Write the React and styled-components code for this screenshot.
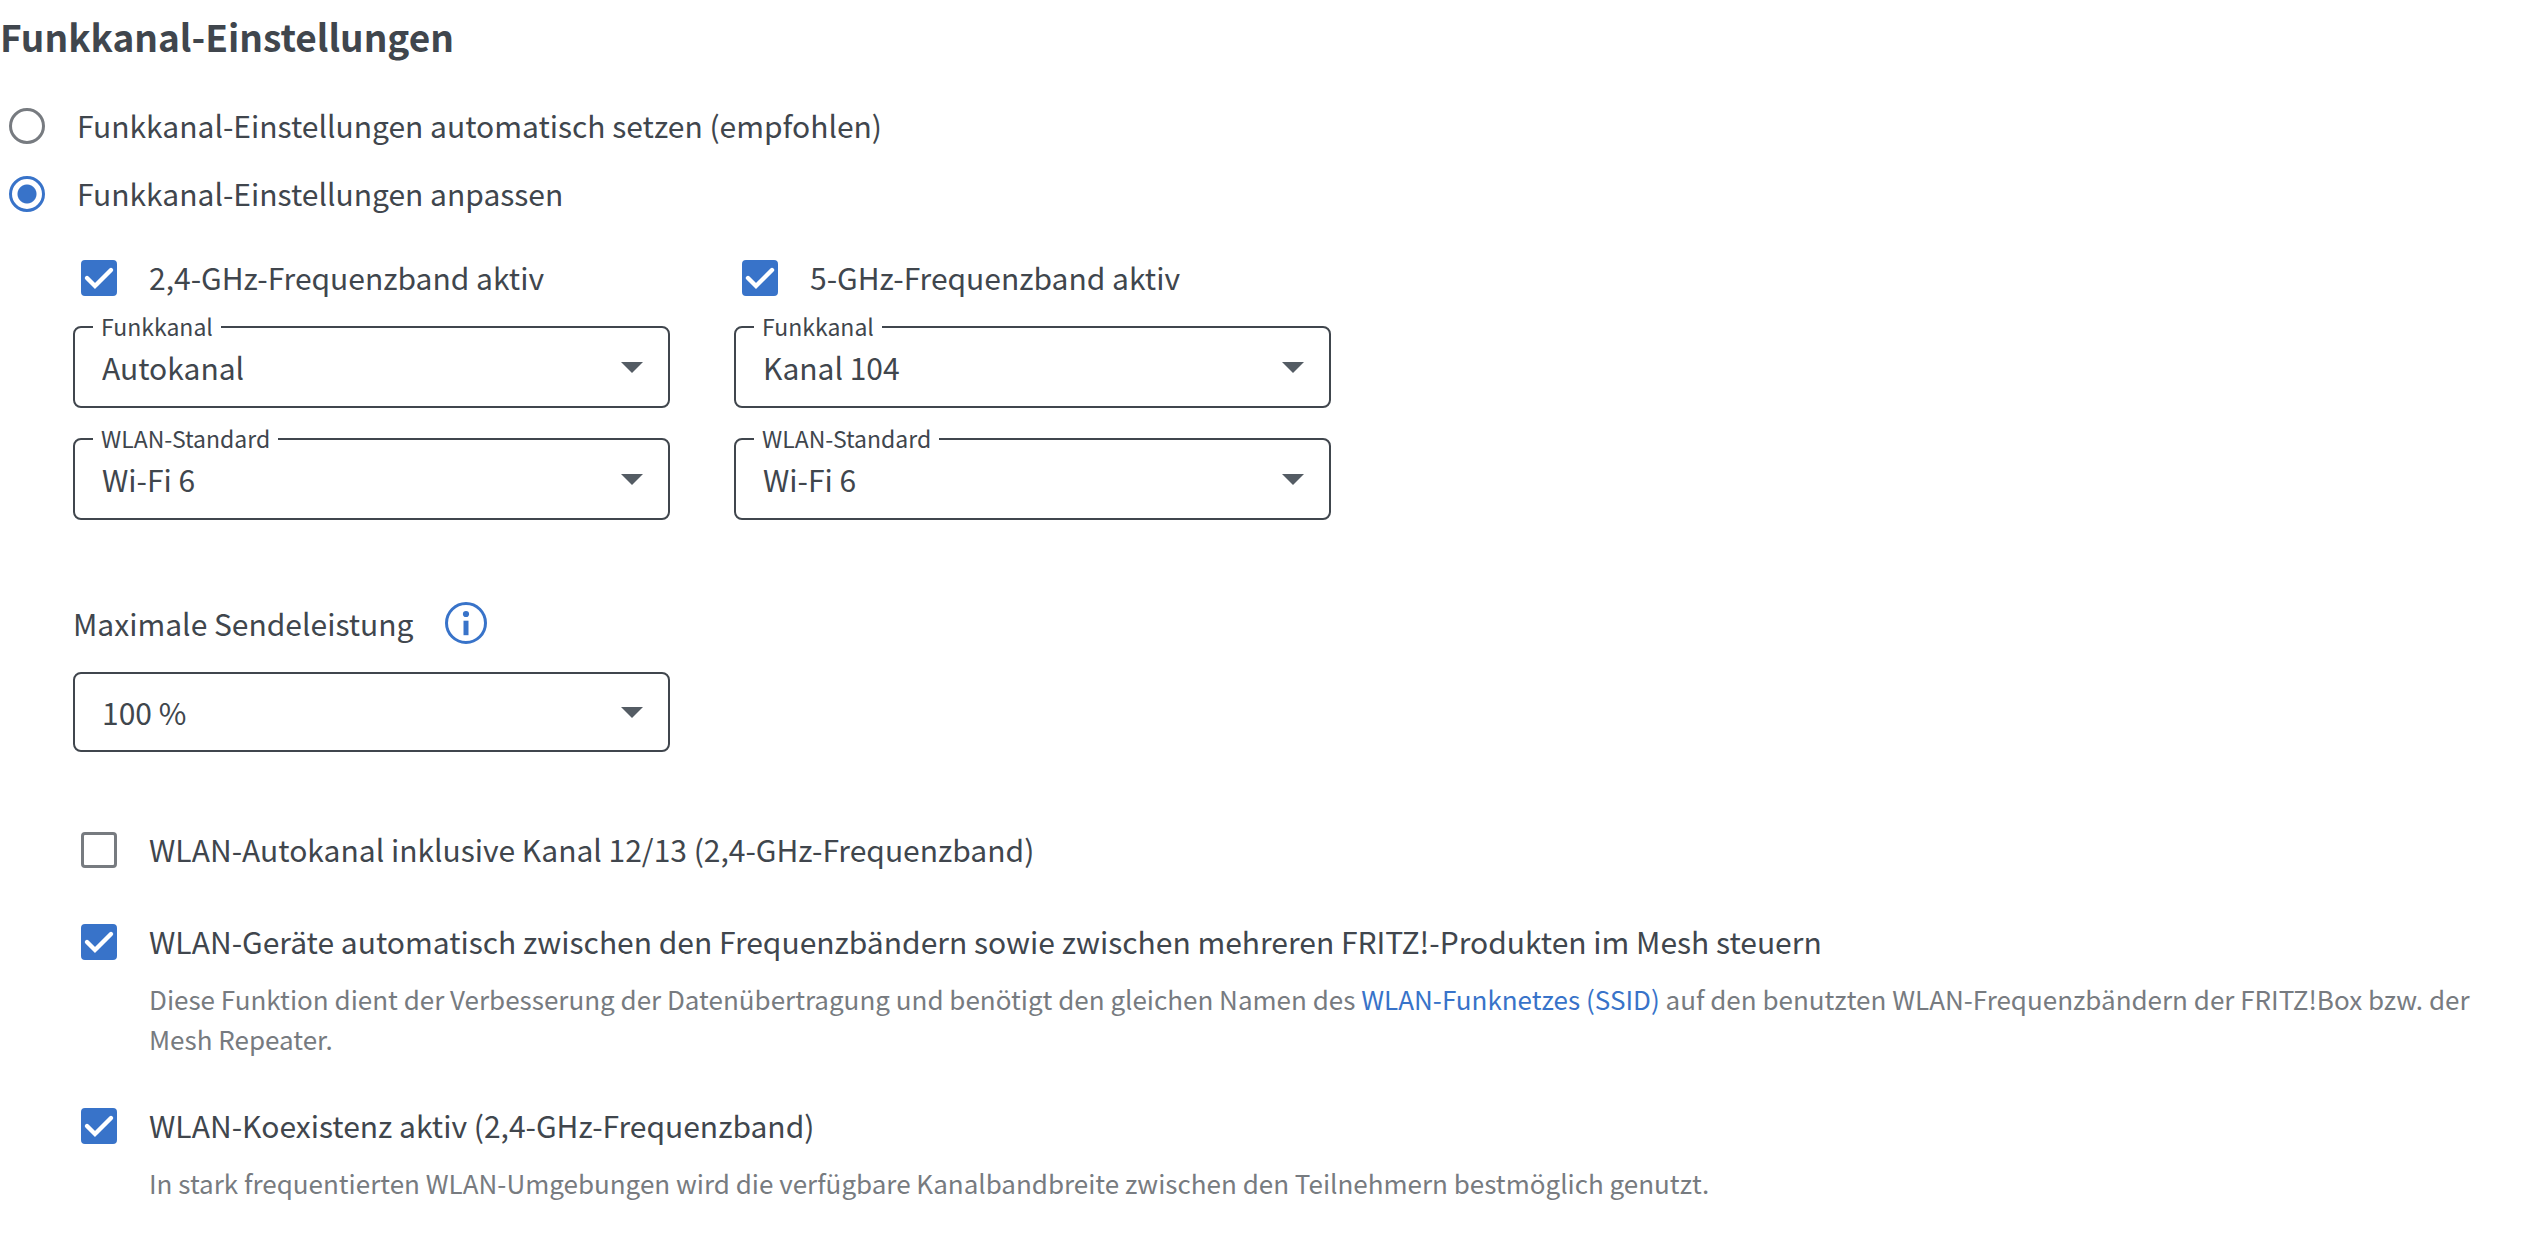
import React, { useState } from 'react';
import styled, { createGlobalStyle } from 'styled-components';

const ink = '#40464d';
const muted = '#777b80';
const blue = '#3873c9';
const font = '"Noto Sans CJK SC", "Noto Sans", sans-serif';

const GlobalStyle = createGlobalStyle`
  *, *::before, *::after { box-sizing: border-box; }
  body {
    margin: 0;
    background: #fff;
    color: ${ink};
    font-family: ${font};
    font-size: 30px;
    line-height: 34px;
  }
`;

const Page = styled.main`
  padding: 16px 32px 32px 0;
`;

const Title = styled.h1`
  margin: 0 0 52px;
  font-size: 37px;
  font-weight: 600;
  line-height: 40px;
`;

const ModeList = styled.div`
  display: flex;
  flex-direction: column;
  gap: 32px;
  padding-left: 9px;
`;

const OptionLabel = styled.label`
  display: flex;
  align-items: flex-start;
  gap: 32px;
`;

const OptionText = styled.span`
  line-height: 34px;
`;

const RadioInput = styled.input`
  appearance: none;
  flex: none;
  width: 36px;
  height: 36px;
  margin: 0;
  border: 3px solid ${muted};
  border-radius: 50%;
  background: #fff;
  &:checked {
    border-color: ${blue};
    background: radial-gradient(circle, ${blue} 9px, #fff 10px);
  }
`;

const Details = styled.div`
  padding: 48px 0 0 73px;
`;

const Bands = styled.div`
  display: grid;
  grid-template-columns: repeat(2, 597px);
  column-gap: 64px;
`;

const Band = styled.section`
  display: flex;
  flex-direction: column;
  gap: 30px;
`;

const CheckBlock = styled.div`
  padding: 0 0 ${(p) => (p.$spaced ? 8 : 0)}px 8px;
`;

const TickHolder = styled.span`
  display: grid;
  flex: none;
  width: 36px;
  height: 36px;
  > * { grid-area: 1 / 1; }
`;

const TickInput = styled.input`
  appearance: none;
  width: 36px;
  height: 36px;
  margin: 0;
  border: 3px solid ${muted};
  border-radius: 4px;
  background: #fff;
  &:checked {
    border-color: ${blue};
    background: ${blue};
  }
`;

const TickMark = styled.svg`
  width: 36px;
  height: 36px;
  pointer-events: none;
`;

const Hint = styled.p`
  margin: 19px 0 1px 68px;
  color: ${muted};
  font-size: 26px;
  line-height: 40px;
`;

const HintLink = styled.a`
  color: ${blue};
  text-decoration: none;
`;

const SelectBox = styled.div`
  position: relative;
  display: grid;
  align-items: center;
  width: 597px;
  > select, > svg { grid-area: 1 / 1; }
`;

const SelectLabel = styled.label`
  position: absolute;
  top: -14px;
  left: 20px;
  padding: 0 8px;
  background: #fff;
  font-size: 23px;
  line-height: 28px;
`;

const SelectInput = styled.select`
  appearance: none;
  width: 100%;
  height: ${(p) => (p.$compact ? 80 : 82)}px;
  padding: 0 64px 0 27px;
  border: 2px solid ${ink};
  border-radius: 8px;
  background: #fff;
  color: ${ink};
  font: inherit;
`;

const Arrow = styled.svg`
  justify-self: end;
  width: 22px;
  height: 11px;
  margin-right: 27px;
  pointer-events: none;
`;

const Power = styled.div`
  padding-top: 82px;
`;

const PowerHead = styled.div`
  display: flex;
  align-items: center;
  gap: 31px;
  margin-bottom: 28px;
`;

const InfoButton = styled.button`
  display: block;
  width: 42px;
  height: 42px;
  padding: 0;
  border: 0;
  background: none;
`;

const Extras = styled.div`
  display: flex;
  flex-direction: column;
  gap: 48px;
  padding-top: 80px;
`;

function Radio({ label, checked, onChange }) {
  return (
    <OptionLabel>
      <RadioInput type="radio" name="mode" checked={checked} onChange={onChange} />
      <OptionText>{label}</OptionText>
    </OptionLabel>
  );
}

function Check({ label, initial = true, spaced = false, children }) {
  const [on, setOn] = useState(initial);
  return (
    <CheckBlock $spaced={spaced}>
      <OptionLabel>
        <TickHolder>
          <TickInput type="checkbox" checked={on} onChange={() => setOn(!on)} />
          {on && (
            <TickMark viewBox="0 0 36 36" aria-hidden="true">
              <path d="M6 18 14 26 30 10" fill="none" stroke="#fff" strokeWidth="4.4" strokeLinecap="round" />
            </TickMark>
          )}
        </TickHolder>
        <OptionText>{label}</OptionText>
      </OptionLabel>
      {children && <Hint>{children}</Hint>}
    </CheckBlock>
  );
}

function Select({ id, label, value, compact }) {
  return (
    <SelectBox>
      <SelectInput id={id} $compact={compact} defaultValue={value}>
        <option>{value}</option>
      </SelectInput>
      <Arrow viewBox="0 0 22 11" aria-hidden="true">
        <path d="M0 0H22L11 11Z" fill="#545c64" />
      </Arrow>
      {label && <SelectLabel htmlFor={id}>{label}</SelectLabel>}
    </SelectBox>
  );
}

export default function App() {
  const [mode, setMode] = useState('custom');
  return (
    <>
      <GlobalStyle />
      <Page>
        <Title>Funkkanal-Einstellungen</Title>
        <ModeList>
          <Radio
            label="Funkkanal-Einstellungen automatisch setzen (empfohlen)"
            checked={mode === 'auto'}
            onChange={() => setMode('auto')}
          />
          <Radio
            label="Funkkanal-Einstellungen anpassen"
            checked={mode === 'custom'}
            onChange={() => setMode('custom')}
          />
        </ModeList>
        <Details>
          <Bands>
            <Band>
              <Check label="2,4-GHz-Frequenzband aktiv" />
              <Select id="channel-24" label="Funkkanal" value="Autokanal" />
              <Select id="standard-24" label="WLAN-Standard" value="Wi-Fi 6" />
            </Band>
            <Band>
              <Check label="5-GHz-Frequenzband aktiv" />
              <Select id="channel-5" label="Funkkanal" value="Kanal 104" />
              <Select id="standard-5" label="WLAN-Standard" value="Wi-Fi 6" />
            </Band>
          </Bands>
          <Power>
            <PowerHead>
              <label htmlFor="power">Maximale Sendeleistung</label>
              <InfoButton type="button" aria-label="Info">
                <svg width="42" height="42" viewBox="0 0 42 42" aria-hidden="true">
                  <circle cx="21" cy="21" r="19.5" fill="none" stroke={blue} strokeWidth="3" />
                  <circle cx="21" cy="12" r="3.1" fill={blue} />
                  <path d="M18.5 18.7h5V33.2h-5z" fill={blue} />
                </svg>
              </InfoButton>
            </PowerHead>
            <Select id="power" value="100 %" compact />
          </Power>
          <Extras>
            <Check label="WLAN-Autokanal inklusive Kanal 12/13 (2,4-GHz-Frequenzband)" initial={false} spaced />
            <Check label="WLAN-Geräte automatisch zwischen den Frequenzbändern sowie zwischen mehreren FRITZ!-Produkten im Mesh steuern">
              Diese Funktion dient der Verbesserung der Datenübertragung und benötigt den gleichen Namen des{' '}
              <HintLink href="#ssid">WLAN-Funknetzes (SSID)</HintLink> auf den benutzten WLAN-Frequenzbändern der
              FRITZ!Box bzw. der Mesh Repeater.
            </Check>
            <Check label="WLAN-Koexistenz aktiv (2,4-GHz-Frequenzband)">
              In stark frequentierten WLAN-Umgebungen wird die verfügbare Kanalbandbreite zwischen den Teilnehmern
              bestmöglich genutzt.
            </Check>
          </Extras>
        </Details>
      </Page>
    </>
  );
}
